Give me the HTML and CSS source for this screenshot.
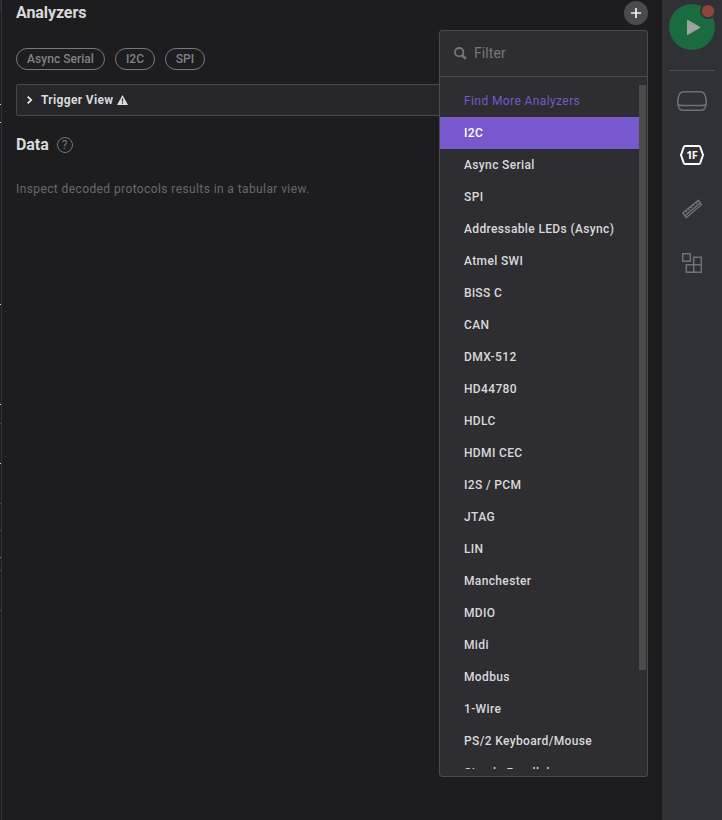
FILE: index.html
```html
<!DOCTYPE html>
<html lang="en">
<head>
<meta charset="utf-8">
<title>Analyzers</title>
<link rel="stylesheet" href="styles.css">
</head>
<body>
<div class="app">
  <svg class="edge" width="2" height="820" aria-hidden="true" shape-rendering="crispEdges">
    <path d="M1 0h1v820h-1z" fill="#343438"/>
    <path d="M0 0h1v12h-1z" fill="#29292c"/>
    <path d="M0 104h1v1h-1zM0 122h1v1h-1zM0 304h1v1h-1zM0 404h1v1h-1zM0 463h1v1h-1z" fill="#d0d0d0"/>
    <path d="M0 557h1v1h-1z" fill="#8a8a8a"/>
    <path d="M0 423h1v1h-1zM0 503h1v1h-1zM0 530h1v1h-1zM0 570h1v1h-1zM0 610h1v1h-1z" fill="#4c4c4e"/>
  </svg>
  <main class="panel">
    <header class="panel-head">
      <h2>Analyzers</h2>
      <div class="add">
        <button class="add-btn" aria-label="Add analyzer">
          <svg width="24" height="24" viewBox="0 0 24 24"><path d="M12 7v10M7 12h10" stroke="#f2f2f3" stroke-width="1.7" fill="none"/></svg>
        </button>
        <div class="menu">
          <div class="filter">
            <svg width="13" height="13" viewBox="0 0 13 13" fill="none" stroke="#77777a"><circle cx="5.2" cy="5.2" r="4.2" stroke-width="1.8"/><path d="M8.300 8.300l3.600 3.600" stroke-width="2.6"/></svg>
            <span>Filter</span>
          </div>
          <div class="list">
            <ul>
              <li class="more">Find More Analyzers</li>
              <li class="active">I2C</li>
              <li>Async Serial</li>
              <li>SPI</li>
              <li>Addressable LEDs (Async)</li>
              <li>Atmel SWI</li>
              <li>BiSS C</li>
              <li>CAN</li>
              <li>DMX-512</li>
              <li>HD44780</li>
              <li>HDLC</li>
              <li>HDMI CEC</li>
              <li>I2S / PCM</li>
              <li>JTAG</li>
              <li>LIN</li>
              <li>Manchester</li>
              <li>MDIO</li>
              <li>Midi</li>
              <li>Modbus</li>
              <li>1-Wire</li>
              <li>PS/2 Keyboard/Mouse</li>
              <li>Simple Parallel</li>
            </ul>
            <div class="thumb"></div>
          </div>
        </div>
      </div>
    </header>
    <div class="chips"><span>Async Serial</span><span>I2C</span><span>SPI</span></div>
    <div class="trigger">
      <svg class="chev" width="6" height="8" viewBox="0 0 6 8"><path d="M.7 .7L4.200 4 .7 7.300" fill="none" stroke="#eee" stroke-width="1.7"/></svg>
      <span>Trigger View</span>
      <svg class="warn" width="11" height="10" viewBox="0 0 11 10"><path d="M5.500 0L11 10H0z" fill="#dcdcde"/><path d="M5.500 3.500v3M5.500 7.400v1.300" stroke="#25252a" stroke-width="1.2"/></svg>
    </div>
    <div class="data-head"><h2>Data</h2><span class="help">?</span></div>
    <p class="hint">Inspect decoded protocols results in a tabular view.</p>
  </main>
  <aside class="rail">
    <div class="play">
      <svg width="48" height="50" viewBox="0 0 48 50"><circle cx="23" cy="23" r="23" fill="#1b6b40"/><path d="M18.500 16.200v14.400l12.500-7.200z" fill="#a0a0a0" stroke="#a0a0a0" stroke-linejoin="round"/><circle cx="39" cy="7.200" r="7.900" fill="#303136"/><circle cx="39" cy="7.200" r="6.200" fill="#90423c"/></svg>
    </div>
    <hr>
    <nav>
      <svg width="32" height="24" viewBox="0 0 32 24" fill="none" stroke="#707175" stroke-width="1.5"><path d="M8.300 2.700h15.600Q28 2.700 29 6.200 31.200 12 29.500 17.300 28.700 21.200 24.500 21.200H7.500Q3.300 21.200 2.500 17.300 .8 12 3 6.200 4.200 2.700 8.300 2.700zM2.400 15.500Q3.500 16.500 6 16.500H26Q28.500 16.500 29.600 15.500"/></svg>
      <svg class="hex" width="28" height="24" viewBox="0 0 28 24"><path d="M7 3h14q.8 0 1.200 1L25 12l-2.800 8q-.4 1-1.200 1H7q-.8 0-1.200-1L3 12l2.800-8q.4-1 1.200-1z" fill="none" stroke="#fff" stroke-width="2"/><text x="13.7" y="16" text-anchor="middle">1F</text></svg>
      <svg width="24" height="24" viewBox="0 0 24 24" fill="none" stroke="#76777b" stroke-width="1.2" stroke-linejoin="round"><path d="M2.800 16L18.300 3.200 21.500 7.600 6.200 20.700zM5.800 13.700l1.200 1.500M8.300 11.600l1.200 1.500M10.800 9.500l1.200 1.500M13.300 7.500l1.200 1.500M15.800 5.400l1.200 1.500M5 18.800L20.200 6"/></svg>
      <svg width="24" height="24" viewBox="0 0 24 24" fill="none" stroke="#707175" stroke-width="1.5"><path d="M2.700 2.700h7.600v7.600H2.700zM13.700 6.300h7.600v7.400h-7.600zM6.300 13.700h7.400v7.600H6.300zM13.700 13.700h7.600v7.600h-7.600z"/></svg>
    </nav>
  </aside>
</div>
</body>
</html>
```
FILE: styles.css
```css
* { box-sizing: border-box; }
body { margin: 0; background: #1d1d1f; color: #d9d9db; font: 500 12px/16px Roboto, sans-serif; }
h2, p, ul { margin: 0; padding: 0; }
.app { display: flex; width: 722px; height: 820px; overflow: hidden; }
.edge { flex: none; display: block; }
.panel { flex: 1; padding: 0 14px; }
.panel-head { display: flex; justify-content: space-between; align-items: center; height: 26px; }
h2 { font-size: 16px; line-height: 20px; font-weight: 700; letter-spacing: -.08px; }
.add { position: relative; width: 24px; height: 24px; }
.add-btn { display: block; width: 24px; height: 24px; padding: 0; border: 0; border-radius: 50%; background: #4a4a4f; }
.add-btn svg { display: block; }
.menu { position: absolute; z-index: 2; top: 29px; right: 0; width: 209px; height: 747px; border: 1px solid #4b4b4e; border-radius: 3px; background: #2e2d32; }
.filter { display: flex; align-items: center; gap: 7px; height: 46px; padding: 0 0 1px 14px; border-bottom: 1px solid #4b4b4e; font-size: 14px; font-weight: 400; letter-spacing: .1px; color: #77777a; }
.list { display: flex; align-items: flex-start; height: 684px; margin-top: 8px; overflow: hidden; }
ul { flex: 1; list-style: none; }
li { height: 32px; padding-left: 24px; line-height: 32px; letter-spacing: .36px; white-space: nowrap; }
.more { color: #7859c9; font-weight: 400; letter-spacing: .4px; }
.active { background: #7758ce; color: #fff; }
.thumb { width: 7px; height: 585px; margin-right: 1px; background: #4b4b4c; }
.chips { display: flex; gap: 10px; margin-top: 22px; }
.chips span { width: 40px; height: 22px; border: 1px solid #77777d; border-radius: 11px; text-align: center; line-height: 20px; letter-spacing: .03px; white-space: nowrap; color: #818188; }
.chips span:first-child { width: 89px; }
.trigger { display: flex; align-items: center; height: 32px; margin-top: 14px; padding-left: 10px; border: 1px solid #47474d; border-radius: 2px; background: #25252a; font-weight: 700; letter-spacing: .32px; }
.chev { margin-right: 8px; }
.warn { margin-left: 4px; }
.data-head { display: flex; align-items: center; gap: 8px; height: 20px; margin-top: 19px; }
.help { width: 16px; height: 16px; border: 1px solid #77777a; border-radius: 50%; text-align: center; font-size: 12px; font-weight: 400; line-height: 14px; color: #77777a; }
.hint { margin-top: 26px; font-weight: 400; letter-spacing: .4px; color: #68686c; }
.rail { flex: none; width: 60px; padding-top: 4px; background: #303136; }
.play { height: 66px; padding-left: 7px; }
.play svg { display: block; overflow: visible; }
hr { height: 1px; margin: 0 7px; border: 0; background: #505155; }
nav { display: flex; flex-direction: column; align-items: center; gap: 30px; padding-top: 18px; }
.hex text { font: 700 11px "Open Sans", sans-serif; letter-spacing: -.6px; fill: #fff; }
```
